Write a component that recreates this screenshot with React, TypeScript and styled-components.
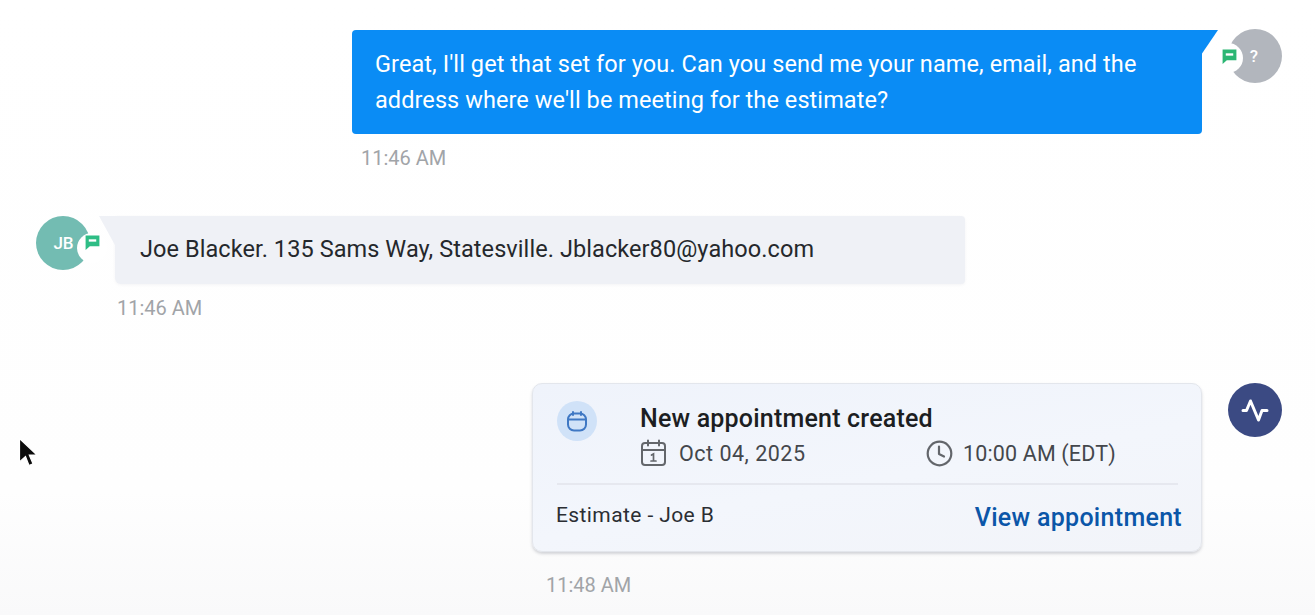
import * as React from 'react'
import styled, {createGlobalStyle} from 'styled-components'

const GlobalStyle = createGlobalStyle`
  html, body {
    margin: 0;
    padding: 0;
    height: 100%;
    overflow: hidden;
  }

  body {
    font-family: Roboto, "Liberation Sans", sans-serif;
    background: #ffffff;
  }
`

const SPage = styled.div`
  position: relative;
  box-sizing: border-box;
  width: 1315px;
  height: 615px;
  overflow: hidden;
  padding: 29px 33px 0 36px;
  display: flex;
  flex-direction: column;
  background: linear-gradient(180deg, #ffffff 0%, #fefefe 80%, #f9f9fa 100%);
`

const SRow = styled.div<{$incoming?: boolean; $top: number}>`
  display: flex;
  flex-direction: ${({$incoming}) => ($incoming ? 'row' : 'row-reverse')};
  align-items: flex-start;
  gap: ${({$incoming}) => ($incoming ? '25px' : '26px')};
  margin-top: ${({$top}) => $top}px;
`

const SMessage = styled.div`
  display: flex;
  flex-direction: column;
`

const SAvatar = styled.div<{$color: string}>`
  position: relative;
  flex: none;
  width: 54px;
  height: 54px;
  border-radius: 50%;
  display: flex;
  align-items: center;
  justify-content: center;
  color: #ffffff;
  font-size: 17px;
  font-weight: 500;
  background: ${({$color}) => $color};
`

const SBadge = styled.div<{$incoming?: boolean}>`
  position: absolute;
  top: ${({$incoming}) => ($incoming ? '17px' : '14px')};
  ${({$incoming}) => ($incoming ? 'right: -17px;' : 'left: -15px;')}
  width: 30px;
  height: 30px;
  border-radius: 50%;
  background: #ffffff;
  display: flex;
  align-items: center;
  justify-content: center;

  & svg {
    margin-left: ${({$incoming}) => ($incoming ? '0' : '3px')};
    margin-bottom: ${({$incoming}) => ($incoming ? '11px' : '3px')};
  }
`

const SAvatarLabel = styled.span<{$incoming?: boolean}>`
  margin-right: ${({$incoming}) => ($incoming ? '0' : '2px')};
  margin-left: ${({$incoming}) => ($incoming ? '1px' : '0')};
`

const SBubble = styled.div<{$incoming?: boolean}>`
  position: relative;
  box-sizing: border-box;
  width: 850px;
  font-size: 23.5px;
  letter-spacing: 0.08px;
  border-radius: ${({$incoming}) => ($incoming ? '0 4px 4px 6px' : '4px 0 4px 4px')};
  background: ${({$incoming}) => ($incoming ? '#eff1f6' : '#0a8cf5')};
  color: ${({$incoming}) => ($incoming ? '#25282c' : '#ffffff')};
  padding: ${({$incoming}) => ($incoming ? '19px 25px 20px' : '16px 24px 16px 23px')};
  line-height: ${({$incoming}) => ($incoming ? '29px' : '36px')};
  height: ${({$incoming}) => ($incoming ? '68px' : '104px')};
  margin-top: ${({$incoming}) => ($incoming ? '0' : '1px')};
  box-shadow: ${({$incoming}) => ($incoming ? '0 1px 3px rgba(60, 70, 100, 0.06)' : 'none')};
`

const STail = styled.svg<{$incoming?: boolean}>`
  position: absolute;
  top: 0;
  width: 17px;
  height: ${({$incoming}) => ($incoming ? '31px' : '25px')};
  ${({$incoming}) => ($incoming ? 'left: -16px;' : 'right: -16px;')}
`

const STime = styled.div<{$left: number; $gap?: number}>`
  margin: ${({$gap}) => $gap ?? 12}px 0 0 ${({$left}) => $left}px;
  font-size: 20px;
  line-height: 24px;
  color: #a1a4a8;
`

const SCard = styled.div`
  box-sizing: border-box;
  width: 670px;
  height: 169px;
  padding: 17px 19px 0 23px;
  border-radius: 10px;
  border: 1px solid #e3e6ec;
  background: linear-gradient(170deg, #eff3fb 0%, #f3f6fc 55%, #f2f4f9 100%);
  box-shadow: 0 2px 3px rgba(70, 75, 90, 0.22);
  display: flex;
  flex-direction: column;
`

const SCardTop = styled.div`
  display: flex;
  align-items: flex-start;
  height: 82px;
  border-bottom: 2px solid #e6e8ef;
  margin: 0 4px 0 1px;
`

const SCardIcon = styled.div`
  flex: none;
  width: 40px;
  height: 40px;
  border-radius: 50%;
  background: #d0e2f8;
  display: flex;
  align-items: center;
  justify-content: center;
  margin-right: 43px;
`

const SCardInfo = styled.div`
  display: flex;
  flex-direction: column;
`

const STitle = styled.div`
  font-size: 25px;
  font-weight: 500;
  letter-spacing: 0.2px;
  line-height: 30px;
  margin-top: 3px;
  color: #1c1e22;
`

const SMeta = styled.div`
  display: flex;
  align-items: center;
  margin-top: 5px;
`

const SMetaItem = styled.div<{$width?: number; $gap: number; $spacing: number}>`
  display: flex;
  align-items: center;
  gap: ${({$gap}) => $gap}px;
  font-size: 21.5px;
  letter-spacing: ${({$spacing}) => $spacing}px;
  color: #44474c;
  width: ${({$width}) => ($width ? `${$width}px` : 'auto')};
`

const SCardBottom = styled.div`
  display: flex;
  align-items: center;
  justify-content: space-between;
  padding-top: 12px;
`

const SEstimate = styled.div`
  font-size: 21px;
  letter-spacing: 0.4px;
  color: #2b2e33;
`

const SLink = styled.a`
  font-size: 25px;
  font-weight: 500;
  letter-spacing: 0.3px;
  margin-top: 6px;
  color: #0b56a8;
`

const SCursor = styled.svg`
  position: absolute;
  left: 16px;
  top: 436px;
`

const ChatIcon = ({color}: {color: string}) => (
  <svg width="17" height="17" viewBox="0 0 16 16">
    <path d="M1.5 1.5h13v10h-9l-4 3.5z" fill={color}/>
    <rect x="4.5" y="5" width="7" height="2.2" fill="#ffffff"/>
  </svg>
)

const Avatar = ({incoming, color, label}: {incoming?: boolean; color: string; label: React.ReactNode}) => (
  <SAvatar $color={color}>
    <SAvatarLabel $incoming={incoming}>{label}</SAvatarLabel>
    <SBadge $incoming={incoming}>
      <ChatIcon color={incoming ? '#2ebd85' : '#2bb673'}/>
    </SBadge>
  </SAvatar>
)

export default function App() {
  return (
    <SPage>
      <GlobalStyle/>

      <SRow $top={0}>
        <Avatar color="#b2b6bd" label="?"/>
        <SMessage>
          <SBubble>
            <STail viewBox="0 0 17 25" preserveAspectRatio="none">
              <path d="M0 0H17L0 25z" fill="#0a8cf5"/>
            </STail>
            Great, I'll get that set for you. Can you send me your name, email, and the address where we'll be meeting for the estimate?
          </SBubble>
          <STime $left={9}>11:46 AM</STime>
        </SMessage>
      </SRow>

      <SRow $incoming $top={46}>
        <Avatar incoming color="#73bcb2" label="JB"/>
        <SMessage>
          <SBubble $incoming>
            <STail $incoming viewBox="0 0 17 31" preserveAspectRatio="none">
              <path d="M0 0H17V31z" fill="#eff1f6"/>
            </STail>
            Joe Blacker. 135 Sams Way, Statesville. Jblacker80@yahoo.com
          </SBubble>
          <STime $left={2}>11:46 AM</STime>
        </SMessage>
      </SRow>

      <SRow $top={63}>
        <SAvatar $color="#3b4a83">
          <svg width="28" height="28" viewBox="0 0 28 28" fill="none" stroke="#ffffff" strokeWidth="3" strokeLinecap="round" strokeLinejoin="round">
            <path d="M2 14.5h3.5L9.5 5l8 19 3.5-9.5h5"/>
          </svg>
        </SAvatar>
        <SMessage>
          <SCard>
            <SCardTop>
              <SCardIcon>
                <svg width="24" height="24" viewBox="0 0 24 24" fill="none" stroke="#3f78c4" strokeWidth="2" strokeLinecap="round">
                  <rect x="3" y="4.5" width="18" height="17" rx="6"/>
                  <path d="M3 10.5h18M8 3v3M16 3v3"/>
                </svg>
              </SCardIcon>
              <SCardInfo>
                <STitle>New appointment created</STitle>
                <SMeta>
                  <SMetaItem $width={286} $gap={12} $spacing={0.5}>
                    <svg width="27" height="28" viewBox="0 0 27 28" fill="none" stroke="#63666b" strokeWidth="2" strokeLinecap="round">
                      <rect x="2" y="4" width="23" height="22" rx="3"/>
                      <path d="M2 11h23M8 1.5v5M19 1.5v5"/>
                      <path d="M11.5 16l2-1v7M11 22h5" strokeWidth="1.7"/>
                    </svg>
                    Oct 04, 2025
                  </SMetaItem>
                  <SMetaItem $gap={10} $spacing={0.15}>
                    <svg width="27" height="27" viewBox="0 0 27 27" fill="none" stroke="#63666b" strokeWidth="2.2" strokeLinecap="round" strokeLinejoin="round">
                      <circle cx="13.5" cy="13.5" r="11.8"/>
                      <path d="M13 6.5v7.5l5 2.5"/>
                    </svg>
                    10:00 AM (EDT)
                  </SMetaItem>
                </SMeta>
              </SCardInfo>
            </SCardTop>
            <SCardBottom>
              <SEstimate>Estimate - Joe B</SEstimate>
              <SLink>View appointment</SLink>
            </SCardBottom>
          </SCard>
          <STime $left={14} $gap={21}>11:48 AM</STime>
        </SMessage>
      </SRow>

      <SCursor width="24" height="34" viewBox="0 0 24 34">
        <path d="M3.5 2.5V26l6-5.5 3.5 9 4-1.8-3.7-8.7H21z" fill="#0c0c0c" stroke="#ffffff" strokeWidth="1.2"/>
      </SCursor>
    </SPage>
  )
}
